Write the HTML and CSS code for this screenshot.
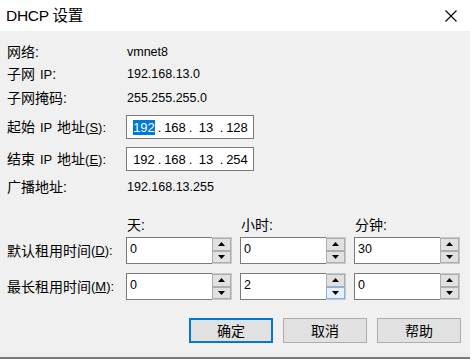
FILE: index.html
```html
<!DOCTYPE html>
<html>
<head>
<meta charset="utf-8">
<link rel="stylesheet" href="styles.css">
</head>
<body>
<div class="window">
  <div class="titlebar">
    <span class="title">DHCP 设置</span>
    <svg class="close" width="12" height="12" viewBox="0 0 12 12"><path d="M0.5 0.5 L11.5 11.5 M11.5 0.5 L0.5 11.5" stroke="#000" stroke-width="1.1" fill="none"/></svg>
  </div>
  <div class="content">
    <div class="row r1"><span class="label">网络:</span><span class="value">vmnet8</span></div>
    <div class="row r2"><span class="label">子网 <span class="lat">IP</span>:</span><span class="value">192.168.13.0</span></div>
    <div class="row r3"><span class="label">子网掩码:</span><span class="value">255.255.255.0</span></div>
    <div class="row r4"><span class="label">起始 <span class="lat">IP</span> 地址<span class="lat">(<u>S</u>):</span></span>
      <div class="ipbox"><span class="seg"><span class="sel">192</span></span><span class="dot">.</span><span class="seg">168</span><span class="dot">.</span><span class="seg">13</span><span class="dot">.</span><span class="seg">128</span></div>
    </div>
    <div class="row r5"><span class="label">结束 <span class="lat">IP</span> 地址<span class="lat">(<u>E</u>):</span></span>
      <div class="ipbox"><span class="seg">192</span><span class="dot">.</span><span class="seg">168</span><span class="dot">.</span><span class="seg">13</span><span class="dot">.</span><span class="seg">254</span></div>
    </div>
    <div class="row r6"><span class="label">广播地址:</span><span class="value">192.168.13.255</span></div>

    <div class="lease">
      <div></div><div class="colh">天:</div><div class="colh">小时:</div><div class="colh">分钟:</div>

      <div class="label llabel">默认租用时间<span class="lat">(<u>D</u>):</span></div>
      <div class="spin"><div class="field">0</div><div class="btns"><div class="sb"><svg width="7" height="4" viewBox="0 0 7 4"><polygon points="3.5,0 7,4 0,4" fill="#000"/></svg></div><div class="sb"><svg width="7" height="4" viewBox="0 0 7 4"><polygon points="0,0 7,0 3.5,4" fill="#000"/></svg></div></div></div>
      <div class="spin"><div class="field">0</div><div class="btns"><div class="sb"><svg width="7" height="4" viewBox="0 0 7 4"><polygon points="3.5,0 7,4 0,4" fill="#000"/></svg></div><div class="sb"><svg width="7" height="4" viewBox="0 0 7 4"><polygon points="0,0 7,0 3.5,4" fill="#000"/></svg></div></div></div>
      <div class="spin"><div class="field">30</div><div class="btns"><div class="sb"><svg width="7" height="4" viewBox="0 0 7 4"><polygon points="3.5,0 7,4 0,4" fill="#000"/></svg></div><div class="sb"><svg width="7" height="4" viewBox="0 0 7 4"><polygon points="0,0 7,0 3.5,4" fill="#000"/></svg></div></div></div>

      <div class="label llabel">最长租用时间<span class="lat">(<u>M</u>):</span></div>
      <div class="spin"><div class="field">0</div><div class="btns"><div class="sb"><svg width="7" height="4" viewBox="0 0 7 4"><polygon points="3.5,0 7,4 0,4" fill="#000"/></svg></div><div class="sb"><svg width="7" height="4" viewBox="0 0 7 4"><polygon points="0,0 7,0 3.5,4" fill="#000"/></svg></div></div></div>
      <div class="spin"><div class="field">2</div><div class="btns"><div class="sb"><svg width="7" height="4" viewBox="0 0 7 4"><polygon points="3.5,0 7,4 0,4" fill="#000"/></svg></div><div class="sb hot"><svg width="7" height="4" viewBox="0 0 7 4"><polygon points="0,0 7,0 3.5,4" fill="#000"/></svg></div></div></div>
      <div class="spin"><div class="field">0</div><div class="btns"><div class="sb"><svg width="7" height="4" viewBox="0 0 7 4"><polygon points="3.5,0 7,4 0,4" fill="#000"/></svg></div><div class="sb"><svg width="7" height="4" viewBox="0 0 7 4"><polygon points="0,0 7,0 3.5,4" fill="#000"/></svg></div></div></div>
    </div>

    <div class="buttons">
      <div class="btn default">确定</div>
      <div class="btn">取消</div>
      <div class="btn">帮助</div>
    </div>
  </div>
  <div class="bottomline"></div>
</div>
</body>
</html>
```

FILE: styles.css
```css
* { box-sizing: border-box; }
html, body { margin: 0; padding: 0; }
body {
  width: 470px;
  height: 359px;
  overflow: hidden;
  background: #f0f0f0;
  font-family: "Liberation Sans", "Noto Sans CJK SC", sans-serif;
  color: #000;
}
.window {
  height: 359px;
  display: flex;
  flex-direction: column;
}
.titlebar {
  height: 31px;
  background: #fff;
  display: flex;
  align-items: center;
  justify-content: space-between;
  padding: 0 13px 0 6px;
}
.title {
  font-size: 15.5px;
  letter-spacing: -0.3px;
  line-height: 18px;
  margin-top: 1px;
}
.close { display: block; }
.content {
  flex: 1;
  padding-left: 7px;
}
.row {
  display: flex;
  align-items: center;
  height: 22px;
}
.r1 { margin-top: 10px; }
.r2 { margin-top: 0; }
.r3 { margin-top: 2px; height: 22px; }
.r4 { margin-top: 6px; height: 24px; }
.r5 { margin-top: 8px; height: 24px; }
.r6 { margin-top: 5px; }
.label {
  width: 119px;
  flex: none;
  font-size: 14px;
  line-height: 16px;
  word-spacing: 1px;
  white-space: nowrap;
}
.lat { font-size: 13px; }
.label u { text-underline-offset: 1px; }
.value {
  font-size: 12.5px;
  line-height: 16px;
  padding-left: 1px;
}
.ipbox {
  width: 128px;
  height: 24px;
  background: #fff;
  border: 1px solid #7a7a7a;
  display: flex;
  align-items: center;
  padding-left: 5px;
  font-size: 13px;
  line-height: 15px;
}
.seg {
  width: 24px;
  text-align: center;
  flex: none;
}
.dot {
  width: 7px;
  text-align: center;
  flex: none;
}
.sel {
  background: #0078d7;
  color: #fff;
  display: inline-block;
}
.lease {
  margin-top: 17px;
  display: grid;
  grid-template-columns: 111px 106px 106px 106px;
  grid-template-rows: 20px 29px 36px;
  column-gap: 8px;
}
.lease > :nth-child(n+5) { margin-top: 2px; }
.lease > :nth-child(n+9) { margin-top: 9px; }
.colh {
  font-size: 14px;
  line-height: 20px;
  padding-left: 1px;
}
.llabel {
  width: auto;
  display: flex;
  align-items: center;
  height: 27px;
  padding-top: 1px;
}
.spin {
  display: flex;
  height: 27px;
}
.field {
  flex: 1;
  background: #fff;
  border: 1px solid #7a7a7a;
  border-right: 0;
  padding: 4px 0 0 3px;
  font-size: 12.5px;
  line-height: 15px;
}
.btns {
  width: 20px;
  flex: none;
  display: flex;
  flex-direction: column;
  background: #f0f0f0;
  border: 1px solid #c8c8c8;
  border-left: 0;
}
.sb {
  flex: 1;
  background: #e1e1e1;
  border: 1px solid #adadad;
  display: flex;
  align-items: center;
  justify-content: center;
}
.sb svg { display: block; }
.sb.hot {
  background: #e5f1fb;
  border-color: #7eb4ea;
}
.buttons {
  margin-top: 18px;
  display: flex;
  justify-content: flex-end;
  gap: 10px;
  padding-right: 9px;
}
.btn {
  width: 84px;
  height: 25px;
  background: #e1e1e1;
  border: 1px solid #adadad;
  display: flex;
  align-items: center;
  justify-content: center;
  font-size: 14px;
  line-height: 16px;
}
.btn.default {
  border: 2px solid #0078d7;
}
.bottomline {
  height: 2px;
  background: #7a7a7a;
}
```
